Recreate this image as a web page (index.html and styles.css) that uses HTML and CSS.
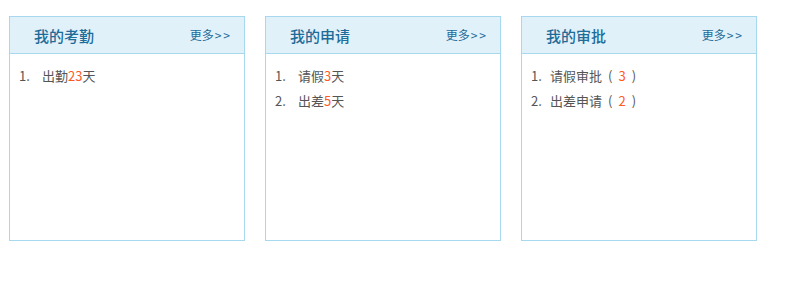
FILE: index.html
```html
<!DOCTYPE html>
<html lang="zh-CN">
<head>
<meta charset="utf-8">
<title>工作台</title>
<link rel="stylesheet" href="styles.css">
</head>
<body>
<div class="panels">
  <div class="panel">
    <div class="panel-head">
      <span class="panel-title">我的考勤</span>
      <a class="more" href="#">更多<span class="arrows">&gt;&gt;</span></a>
    </div>
    <ul class="list">
      <li><span class="num">1.</span>出勤<em class="hl">23</em>天</li>
    </ul>
  </div>
  <div class="panel">
    <div class="panel-head">
      <span class="panel-title">我的申请</span>
      <a class="more" href="#">更多<span class="arrows">&gt;&gt;</span></a>
    </div>
    <ul class="list">
      <li><span class="num">1.</span>请假<em class="hl">3</em>天</li>
      <li><span class="num">2.</span>出差<em class="hl">5</em>天</li>
    </ul>
  </div>
  <div class="panel">
    <div class="panel-head">
      <span class="panel-title">我的审批</span>
      <a class="more" href="#">更多<span class="arrows">&gt;&gt;</span></a>
    </div>
    <ul class="list list-tight">
      <li><span class="num">1.</span>请假审批<span class="paren">(</span><em class="hl">3</em><span class="paren">)</span></li>
      <li><span class="num">2.</span>出差申请<span class="paren">(</span><em class="hl">2</em><span class="paren">)</span></li>
    </ul>
  </div>
</div>
</body>
</html>
```
FILE: styles.css
```css
html, body {
  margin: 0;
  padding: 0;
  background: #fff;
}
body {
  font-family: "Noto Sans CJK SC", "Noto Sans", sans-serif;
}
.panels {
  display: flex;
  gap: 20px;
  padding: 16px 0 0 9px;
}
.panel {
  width: 236px;
  height: 225px;
  box-sizing: border-box;
  border: 1px solid #a8d8ef;
  background: #fff;
}
.panel-head {
  height: 36px;
  background: #e1f1fa;
  border-bottom: 1px solid #a8d8ef;
  display: flex;
  align-items: center;
  justify-content: space-between;
  padding: 0 12px 0 24px;
}
.panel-title {
  font-size: 15px;
  font-weight: 500;
  color: #1d6c99;
  line-height: 1;
}
.more {
  font-size: 12px;
  color: #1d6c99;
  text-decoration: none;
  line-height: 1;
}
.arrows {
  letter-spacing: 2px;
  margin-left: 1px;
}
.list {
  list-style: none;
  margin: 0;
  padding: 9px 0 0 9px;
  font-size: 13px;
  color: #555;
}
.list li {
  line-height: 25px;
  height: 25px;
}
.num {
  display: inline-block;
  width: 23px;
}
.list-tight .num {
  width: 19px;
}
.hl {
  font-style: normal;
  color: #ff5a1f;
}
.paren {
  display: inline-block;
  margin: 0 6px 0 6px;
}
```
